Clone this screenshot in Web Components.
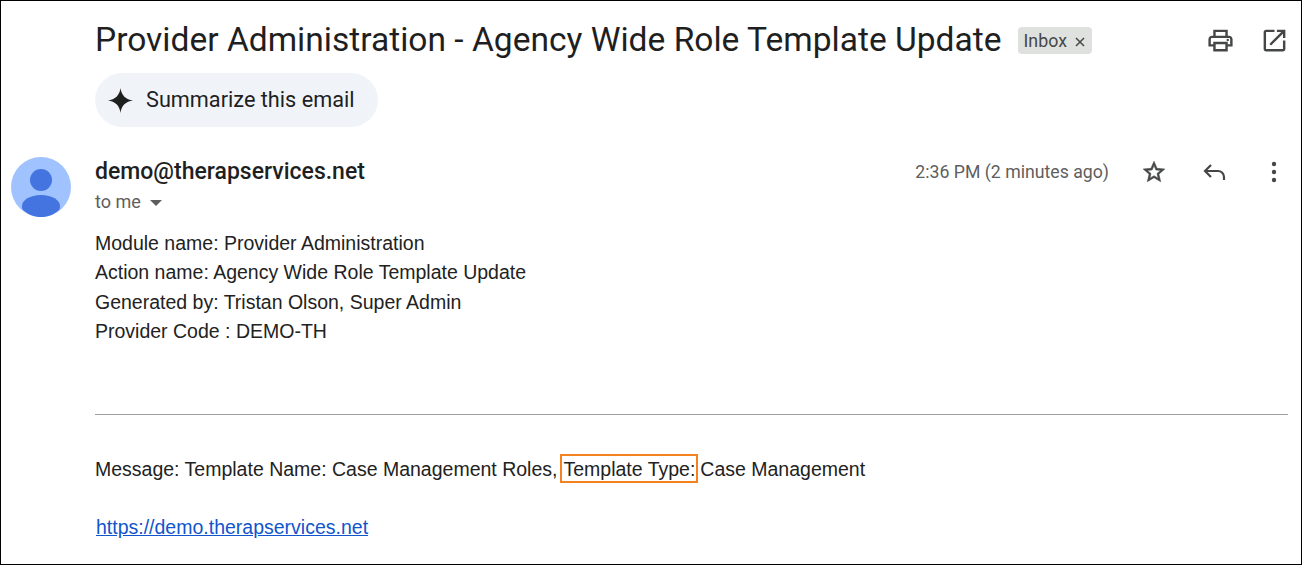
<!DOCTYPE html>
<html>
<head>
<meta charset="utf-8">
<title>Mail</title>
<style>
  html, body { margin: 0; padding: 0; background: #fff; }
</style>
</head>
<body>
<mail-view></mail-view>

<script>
class MailSubject extends HTMLElement {
  constructor() {
    super()
    this.shadow = this.attachShadow({ mode: 'open' })
  }

  connectedCallback() {
    this.shadow.innerHTML = /*html*/`
      <style>
        :host { display: flex; align-items: center; height: 54px; padding: 24px 0 0 94px; box-sizing: border-box; }
        h1 { margin: 0; font: 400 33.56px/40px Roboto, sans-serif; color: #1f1f1f; white-space: nowrap; }
        .label { display: flex; align-items: center; gap: 8px; height: 27px; margin-left: 16px; padding: 0 7px 0 6px; border-radius: 4px; background: #dfe1df; color: #444746; font: 400 17.8px Roboto, sans-serif; }
        .label svg { width: 10px; height: 10px; margin-top: 3px; }
        .tools { display: flex; gap: 25px; margin-left: auto; margin-right: 12px; }
        .tools svg { width: 29px; height: 29px; fill: #444746; display: block; }
      </style>
      <h1><slot></slot></h1>
      <span class="label">Inbox
        <svg viewBox="0 0 10 10"><path d="M1 1l8 8M9 1l-8 8" stroke="#444746" stroke-width="1.5" fill="none"/></svg>
      </span>
      <div class="tools">
        <svg viewBox="0 0 24 24"><path d="M19 8h-1V3H6v5H5c-1.66 0-3 1.34-3 3v6h4v4h12v-4h4v-6c0-1.66-1.34-3-3-3zM8 5h8v3H8V5zm8 14H8v-4h8v4zm2-4v-2H6v2H4v-4c0-.55.45-1 1-1h14c.55 0 1 .45 1 1v4h-2z"/><circle cx="18" cy="11.5" r="1"/></svg>
        <svg viewBox="0 0 24 24"><path d="M19 19H5V5h7V3H5c-1.1 0-2 .9-2 2v14c0 1.1.9 2 2 2h14c1.1 0 2-.9 2-2v-7h-2v7zM14 3v2h3.59l-9.83 9.83 1.41 1.41L19 6.41V10h2V3h-7z"/></svg>
      </div>
    `
  }
}

class SummaryChip extends HTMLElement {
  constructor() {
    super()
    this.shadow = this.attachShadow({ mode: 'open' })
  }

  connectedCallback() {
    this.shadow.innerHTML = /*html*/`
      <style>
        :host { display: inline-flex; align-items: center; gap: 13px; height: 54px; margin: 18px 0 0 94px; padding: 0 23px 2px 13px; border-radius: 27px; background: #f0f4f9; box-sizing: border-box; color: #1f1f1f; font: 400 21.7px Roboto, sans-serif; }
        svg { width: 25px; height: 25px; fill: #1f1f1f; margin-top: 2px; }
      </style>
      <svg viewBox="0 0 24 24"><path d="M12 0c.7 6.800 5.200 11.300 12 12-6.800.7-11.300 5.200-12 12-.7-6.800-5.200-11.300-12-12 6.800-.7 11.300-5.200 12-12z"/></svg>
      <slot></slot>
    `
  }
}

class MessageHeader extends HTMLElement {
  constructor() {
    super()
    this.shadow = this.attachShadow({ mode: 'open' })
  }

  connectedCallback() {
    this.shadow.innerHTML = /*html*/`
      <style>
        :host { display: flex; margin-top: 30px; padding-left: 10px; font-family: Roboto, sans-serif; }
        .avatar { width: 60px; height: 60px; flex: none; }
        .who { margin-left: 24px; }
        .from { margin-top: 1px; font-size: 23px; font-weight: 500; line-height: 28px; color: #1f1f1f; }
        .to { display: flex; align-items: center; gap: 9px; margin-top: 2px; font-size: 18px; line-height: 28px; color: #5e5e5e; }
        .to svg { width: 12px; height: 6px; fill: #5e5e5e; margin-top: 2px; }
        .right { display: flex; align-items: center; height: 30px; margin-left: auto; color: #5e5e5e; font-size: 17.7px; }
        .icons { display: flex; gap: 34px; margin-left: 32px; margin-right: 14px; }
        .icons svg { width: 26px; height: 26px; fill: #444746; display: block; }
        .icons .star { stroke: #444746; stroke-width: .5; }
        .icons .reply { fill: none; stroke: #444746; stroke-width: 2.2; }
      </style>
      <svg class="avatar" viewBox="0 0 60 60">
        <circle cx="30" cy="30" r="30" fill="#a0c3ff"/>
        <circle cx="30" cy="23" r="11" fill="#4374e0"/>
        <path d="M30 38c-11 0-19 5-19 11 0 1.500.2 3 1 4 5 4.500 11 7 18 7s13-2.500 18-7c.8-1 1-2.500 1-4 0-6-8-11-19-11z" fill="#4374e0"/>
      </svg>
      <div class="who">
        <div class="from"><slot name="from"></slot></div>
        <div class="to">to me <svg viewBox="0 0 12 6"><path d="M0 0h12L6 6z"/></svg></div>
      </div>
      <div class="right">
        <slot name="date"></slot>
        <div class="icons">
          <svg class="star" viewBox="0 0 24 24"><path d="M22 9.240l-7.190-.62L12 2 9.190 8.630 2 9.240l5.460 4.730L5.820 21 12 17.270 18.180 21l-1.630-7.030L22 9.240zM12 15.400l-3.760 2.270 1-4.280-3.320-2.880 4.380-.38L12 6.100l1.710 4.040 4.380.38-3.320 2.880 1 4.280L12 15.400z"/></svg>
          <svg class="reply" viewBox="0 0 26 26"><path d="M10 6L4 12l6 6M4 12h13a6 6 0 0 1 6 6v3"/></svg>
          <svg viewBox="0 0 26 26"><circle cx="13" cy="5" r="2.200"/><circle cx="13" cy="13" r="2.200"/><circle cx="13" cy="21" r="2.200"/></svg>
        </div>
      </div>
    `
  }
}

class MessageBody extends HTMLElement {
  constructor() {
    super()
    this.shadow = this.attachShadow({ mode: 'open' })
  }

  connectedCallback() {
    this.shadow.innerHTML = /*html*/`
      <style>
        :host { display: block; margin: 12px 13px 0 94px; font: 400 19.5px/29.3px "Liberation Sans", Arial, sans-serif; color: #222; }
        hr { height: 1px; margin: 68px 0 40px; border: 0; background: #a0a0a0; }
        .mark { display: inline-block; box-sizing: border-box; height: 29px; line-height: 27px; vertical-align: middle; margin: -5px 2px 0 3px; padding: 0 1px; border: 2px solid #f58220; }
        p { margin: 0; }
        a { display: inline-block; margin: 29px 0 0 1px; color: #1155cc; }
      </style>
      <p>Module name: Provider Administration</p>
      <p>Action name: Agency Wide Role Template Update</p>
      <p>Generated by: Tristan Olson, Super Admin</p>
      <p>Provider Code : DEMO-TH</p>
      <hr>
      <p>Message: Template Name: Case Management Roles,<span class="mark">Template Type:</span>Case Management</p>
      <a href="https://demo.therapservices.net">https://demo.therapservices.net</a>
    `
  }
}

class MailView extends HTMLElement {
  constructor() {
    super()
    this.shadow = this.attachShadow({ mode: 'open' })
  }

  connectedCallback() {
    this.shadow.innerHTML = /*html*/`
      <style>
        :host { display: block; width: 1302px; height: 565px; box-sizing: border-box; border: 1px solid #000; overflow: hidden; background: #fff; }
        div { font-size: 0; }
      </style>
      <mail-subject>Provider Administration - Agency Wide Role Template Update</mail-subject>
      <div><summary-chip>Summarize this email</summary-chip></div>
      <message-header>
        <span slot="from">demo@therapservices.net</span>
        <span slot="date">2:36 PM (2 minutes ago)</span>
      </message-header>
      <message-body></message-body>
    `
  }
}

customElements.define('mail-subject', MailSubject)
customElements.define('summary-chip', SummaryChip)
customElements.define('message-header', MessageHeader)
customElements.define('message-body', MessageBody)
customElements.define('mail-view', MailView)
</script>
</body>
</html>
